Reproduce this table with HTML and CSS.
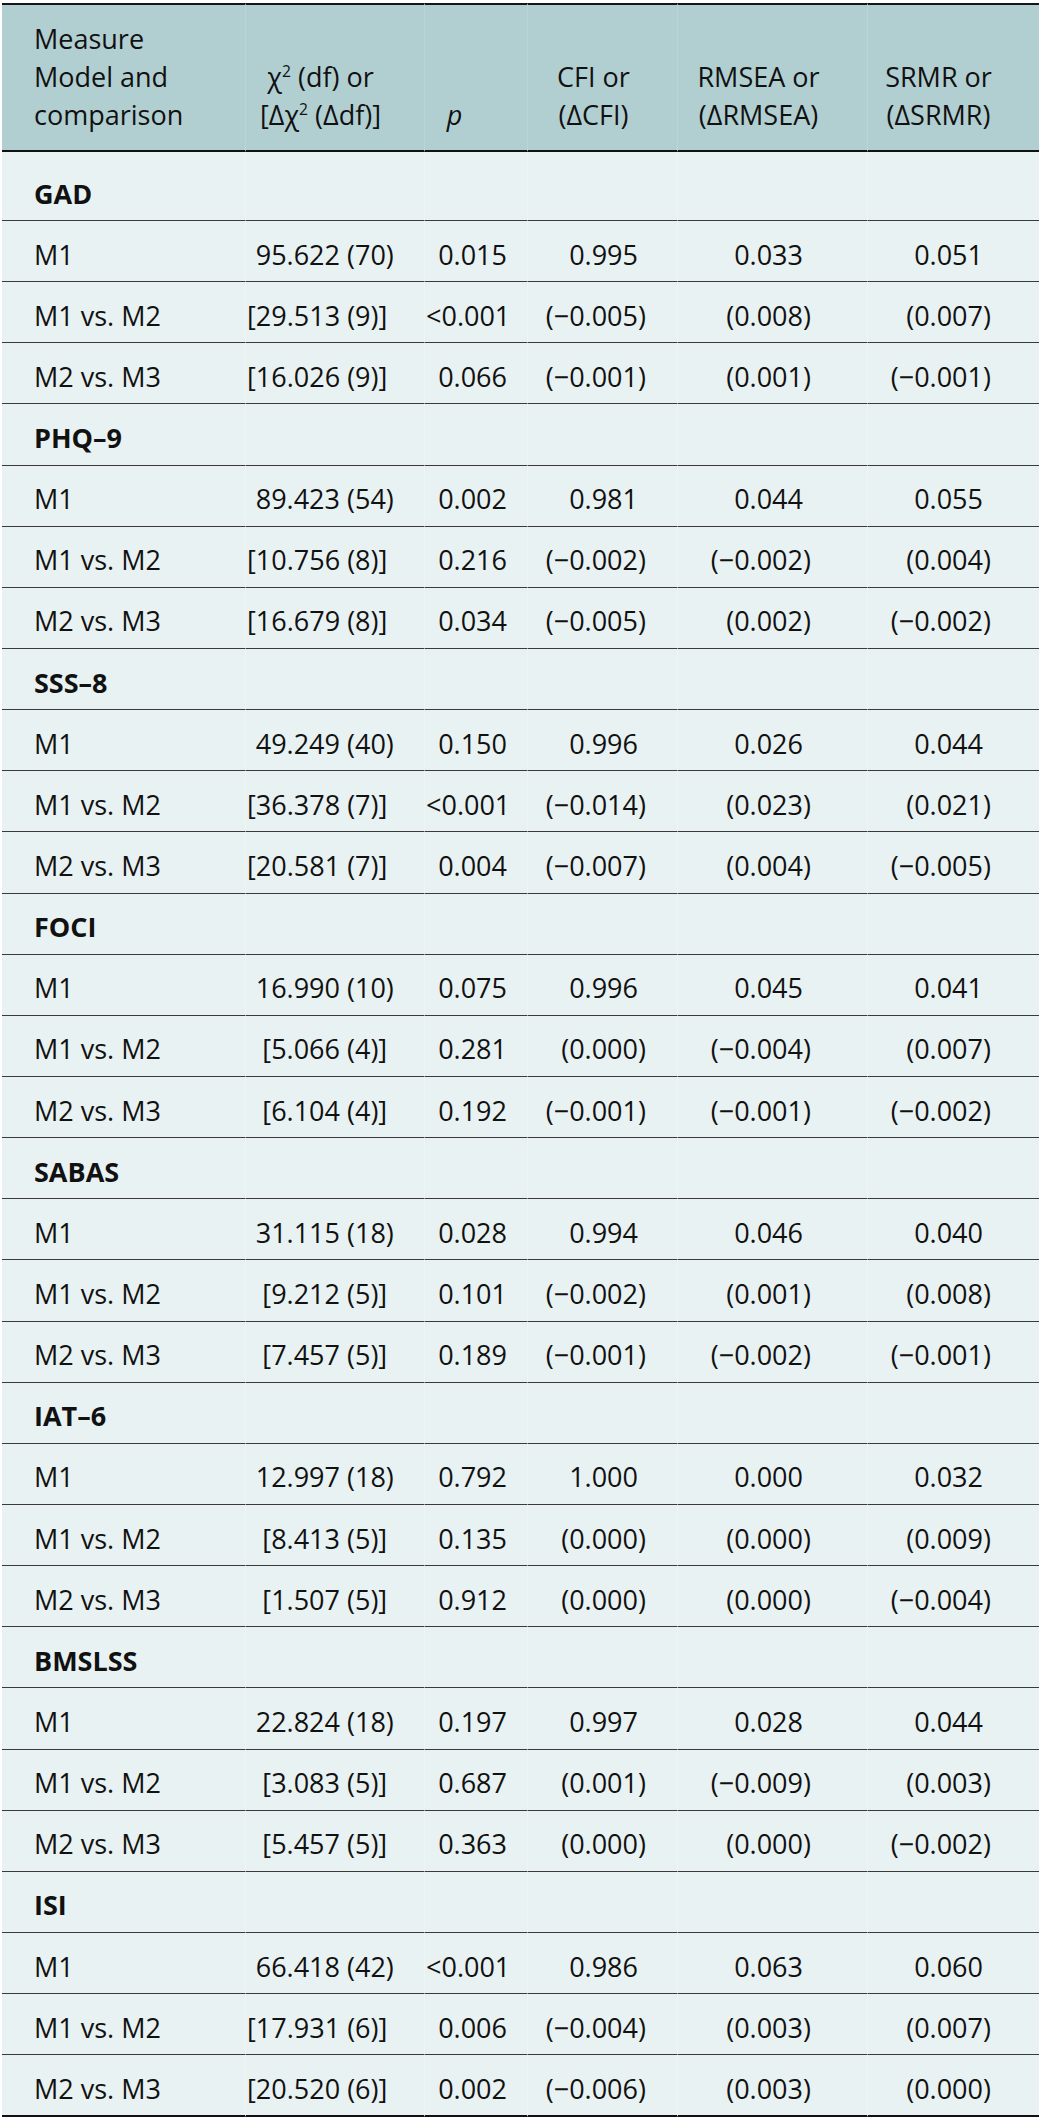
FILE: index.html
```html
<!DOCTYPE html>
<html lang="en">
<head>
<meta charset="utf-8">
<title>Measurement invariance</title>
<link rel="stylesheet" href="styles.css">
</head>
<body>
<div class="wrap">
<table class="fit">
<colgroup>
<col class="w1"><col class="w2"><col class="w3"><col class="w4"><col class="w5"><col class="w6">
</colgroup>
<thead>
<tr>
<th class="h1">Measure<br>Model and<br>comparison</th>
<th class="h2">χ<sup>2</sup> (df) or<br>[Δχ<sup>2</sup> (Δdf)]</th>
<th class="h3"><span class="it">p</span></th>
<th class="h4">CFI or<br>(ΔCFI)</th>
<th class="h5">RMSEA or<br>(ΔRMSEA)</th>
<th class="h6">SRMR or<br>(ΔSRMR)</th>
</tr>
</thead>
<tbody>
<tr class="grp"><td class="name">GAD</td><td></td><td></td><td></td><td></td><td></td></tr>
<tr><td class="name">M1</td><td class="chi">95.622 <span class="df">(70)</span></td><td class="p">0.015</td><td class="cfi">0.995<span class="cp"></span></td><td class="rm">0.033<span class="cp"></span></td><td class="sr">0.051<span class="cp"></span></td></tr>
<tr><td class="name">M1 vs. M2</td><td class="chi">[29.513 <span class="df">(9)]</span></td><td class="p">&lt;0.001</td><td class="cfi">(−0.005<span class="cp">)</span></td><td class="rm">(0.008<span class="cp">)</span></td><td class="sr">(0.007<span class="cp">)</span></td></tr>
<tr><td class="name">M2 vs. M3</td><td class="chi">[16.026 <span class="df">(9)]</span></td><td class="p">0.066</td><td class="cfi">(−0.001<span class="cp">)</span></td><td class="rm">(0.001<span class="cp">)</span></td><td class="sr">(−0.001<span class="cp">)</span></td></tr>

<tr class="grp"><td class="name">PHQ–9</td><td></td><td></td><td></td><td></td><td></td></tr>
<tr><td class="name">M1</td><td class="chi">89.423 <span class="df">(54)</span></td><td class="p">0.002</td><td class="cfi">0.981<span class="cp"></span></td><td class="rm">0.044<span class="cp"></span></td><td class="sr">0.055<span class="cp"></span></td></tr>
<tr><td class="name">M1 vs. M2</td><td class="chi">[10.756 <span class="df">(8)]</span></td><td class="p">0.216</td><td class="cfi">(−0.002<span class="cp">)</span></td><td class="rm">(−0.002<span class="cp">)</span></td><td class="sr">(0.004<span class="cp">)</span></td></tr>
<tr><td class="name">M2 vs. M3</td><td class="chi">[16.679 <span class="df">(8)]</span></td><td class="p">0.034</td><td class="cfi">(−0.005<span class="cp">)</span></td><td class="rm">(0.002<span class="cp">)</span></td><td class="sr">(−0.002<span class="cp">)</span></td></tr>

<tr class="grp"><td class="name">SSS–8</td><td></td><td></td><td></td><td></td><td></td></tr>
<tr><td class="name">M1</td><td class="chi">49.249 <span class="df">(40)</span></td><td class="p">0.150</td><td class="cfi">0.996<span class="cp"></span></td><td class="rm">0.026<span class="cp"></span></td><td class="sr">0.044<span class="cp"></span></td></tr>
<tr><td class="name">M1 vs. M2</td><td class="chi">[36.378 <span class="df">(7)]</span></td><td class="p">&lt;0.001</td><td class="cfi">(−0.014<span class="cp">)</span></td><td class="rm">(0.023<span class="cp">)</span></td><td class="sr">(0.021<span class="cp">)</span></td></tr>
<tr><td class="name">M2 vs. M3</td><td class="chi">[20.581 <span class="df">(7)]</span></td><td class="p">0.004</td><td class="cfi">(−0.007<span class="cp">)</span></td><td class="rm">(0.004<span class="cp">)</span></td><td class="sr">(−0.005<span class="cp">)</span></td></tr>

<tr class="grp"><td class="name">FOCI</td><td></td><td></td><td></td><td></td><td></td></tr>
<tr><td class="name">M1</td><td class="chi">16.990 <span class="df">(10)</span></td><td class="p">0.075</td><td class="cfi">0.996<span class="cp"></span></td><td class="rm">0.045<span class="cp"></span></td><td class="sr">0.041<span class="cp"></span></td></tr>
<tr><td class="name">M1 vs. M2</td><td class="chi">[5.066 <span class="df">(4)]</span></td><td class="p">0.281</td><td class="cfi">(0.000<span class="cp">)</span></td><td class="rm">(−0.004<span class="cp">)</span></td><td class="sr">(0.007<span class="cp">)</span></td></tr>
<tr><td class="name">M2 vs. M3</td><td class="chi">[6.104 <span class="df">(4)]</span></td><td class="p">0.192</td><td class="cfi">(−0.001<span class="cp">)</span></td><td class="rm">(−0.001<span class="cp">)</span></td><td class="sr">(−0.002<span class="cp">)</span></td></tr>

<tr class="grp"><td class="name">SABAS</td><td></td><td></td><td></td><td></td><td></td></tr>
<tr><td class="name">M1</td><td class="chi">31.115 <span class="df">(18)</span></td><td class="p">0.028</td><td class="cfi">0.994<span class="cp"></span></td><td class="rm">0.046<span class="cp"></span></td><td class="sr">0.040<span class="cp"></span></td></tr>
<tr><td class="name">M1 vs. M2</td><td class="chi">[9.212 <span class="df">(5)]</span></td><td class="p">0.101</td><td class="cfi">(−0.002<span class="cp">)</span></td><td class="rm">(0.001<span class="cp">)</span></td><td class="sr">(0.008<span class="cp">)</span></td></tr>
<tr><td class="name">M2 vs. M3</td><td class="chi">[7.457 <span class="df">(5)]</span></td><td class="p">0.189</td><td class="cfi">(−0.001<span class="cp">)</span></td><td class="rm">(−0.002<span class="cp">)</span></td><td class="sr">(−0.001<span class="cp">)</span></td></tr>

<tr class="grp"><td class="name">IAT–6</td><td></td><td></td><td></td><td></td><td></td></tr>
<tr><td class="name">M1</td><td class="chi">12.997 <span class="df">(18)</span></td><td class="p">0.792</td><td class="cfi">1.000<span class="cp"></span></td><td class="rm">0.000<span class="cp"></span></td><td class="sr">0.032<span class="cp"></span></td></tr>
<tr><td class="name">M1 vs. M2</td><td class="chi">[8.413 <span class="df">(5)]</span></td><td class="p">0.135</td><td class="cfi">(0.000<span class="cp">)</span></td><td class="rm">(0.000<span class="cp">)</span></td><td class="sr">(0.009<span class="cp">)</span></td></tr>
<tr><td class="name">M2 vs. M3</td><td class="chi">[1.507 <span class="df">(5)]</span></td><td class="p">0.912</td><td class="cfi">(0.000<span class="cp">)</span></td><td class="rm">(0.000<span class="cp">)</span></td><td class="sr">(−0.004<span class="cp">)</span></td></tr>

<tr class="grp"><td class="name">BMSLSS</td><td></td><td></td><td></td><td></td><td></td></tr>
<tr><td class="name">M1</td><td class="chi">22.824 <span class="df">(18)</span></td><td class="p">0.197</td><td class="cfi">0.997<span class="cp"></span></td><td class="rm">0.028<span class="cp"></span></td><td class="sr">0.044<span class="cp"></span></td></tr>
<tr><td class="name">M1 vs. M2</td><td class="chi">[3.083 <span class="df">(5)]</span></td><td class="p">0.687</td><td class="cfi">(0.001<span class="cp">)</span></td><td class="rm">(−0.009<span class="cp">)</span></td><td class="sr">(0.003<span class="cp">)</span></td></tr>
<tr><td class="name">M2 vs. M3</td><td class="chi">[5.457 <span class="df">(5)]</span></td><td class="p">0.363</td><td class="cfi">(0.000<span class="cp">)</span></td><td class="rm">(0.000<span class="cp">)</span></td><td class="sr">(−0.002<span class="cp">)</span></td></tr>

<tr class="grp"><td class="name">ISI</td><td></td><td></td><td></td><td></td><td></td></tr>
<tr><td class="name">M1</td><td class="chi">66.418 <span class="df">(42)</span></td><td class="p">&lt;0.001</td><td class="cfi">0.986<span class="cp"></span></td><td class="rm">0.063<span class="cp"></span></td><td class="sr">0.060<span class="cp"></span></td></tr>
<tr><td class="name">M1 vs. M2</td><td class="chi">[17.931 <span class="df">(6)]</span></td><td class="p">0.006</td><td class="cfi">(−0.004<span class="cp">)</span></td><td class="rm">(0.003<span class="cp">)</span></td><td class="sr">(0.007<span class="cp">)</span></td></tr>
<tr><td class="name">M2 vs. M3</td><td class="chi">[20.520 <span class="df">(6)]</span></td><td class="p">0.002</td><td class="cfi">(−0.006<span class="cp">)</span></td><td class="rm">(0.003<span class="cp">)</span></td><td class="sr">(0.000<span class="cp">)</span></td></tr>
</tbody>
</table>
</div>
</body>
</html>
```

FILE: styles.css
```css
html, body {
  margin: 0;
  padding: 0;
  background: #ffffff;
}

body {
  font-family: "Open Sans", "Noto Sans", sans-serif;
  color: #111111;
}

.wrap {
  padding: 3px 2px 0 2px;
}

.fit {
  width: 1037px;
  border-collapse: separate;
  border-spacing: 0;
  table-layout: fixed;
  font-size: 27px;
  line-height: 38px;
}

.w1 { width: 243px; }
.w2 { width: 179px; }
.w3 { width: 103px; }
.w4 { width: 150px; }
.w5 { width: 190px; }
.w6 { width: 172px; }

.fit th {
  background: #b1cfd1;
  font-weight: 400;
  vertical-align: bottom;
  text-align: center;
  border-top: 2px solid #161616;
  border-bottom: 2px solid #111111;
  padding-top: 14.5px;
  padding-bottom: 16.5px;
  white-space: nowrap;
}

.fit th + th {
  border-left: 1px solid #bad5d7;
}

.fit sup {
  font-size: 0.58em;
  line-height: 0;
  vertical-align: 0.62em;
}

.it {
  font-style: italic;
}

.fit th.h1 { text-align: left; padding-left: 32px; }
.h2 { padding-left: 8px; padding-right: 37px; }
.h3 { padding-left: 0; padding-right: 43px; }
.h4 { padding-left: 0; padding-right: 18px; }
.h5 { padding-left: 0; padding-right: 28px; }
.h6 { padding-left: 0; padding-right: 30px; }

.fit td {
  background: #e9f2f2;
  padding-top: 14.65px;
  padding-bottom: 7.5px;
  border-bottom: 1px solid #3a3a3a;
  white-space: nowrap;
  text-align: right;
}

.fit td + td {
  border-left: 1px solid #eef5f5;
}

.fit tbody tr:first-child td {
  padding-top: 22.5px;
}

.fit tbody tr:last-child td {
  border-bottom: 2px solid #111111;
}

.grp .name {
  font-weight: 700;
}

.fit td.name {
  text-align: left;
  padding-left: 32px;
}

.chi { padding-right: 29px; }

.df {
  display: inline-block;
  width: 48px;
  text-align: left;
}

.p { padding-right: 20px; }

.cp {
  display: inline-block;
  width: 9px;
  text-align: left;
}

.cfi { padding-right: 30px; }
.rm { padding-right: 55px; }
.sr { padding-right: 47px; }
```
